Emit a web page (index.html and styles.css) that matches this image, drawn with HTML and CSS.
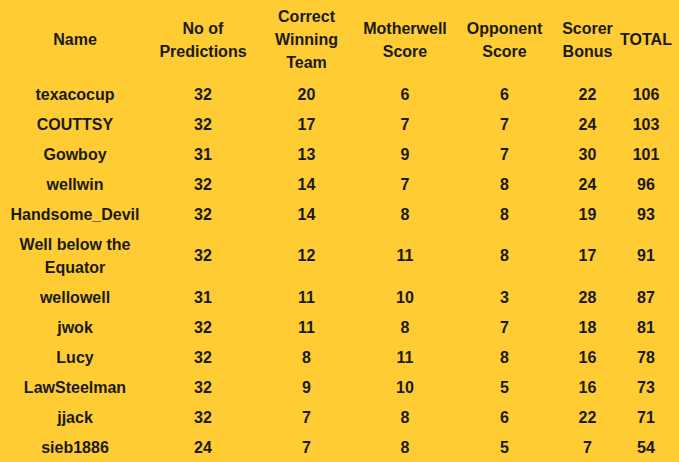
FILE: index.html
```html
<!DOCTYPE html>
<html>
<head>
<meta charset="utf-8">
<link rel="stylesheet" href="styles.css">
</head>
<body>
<table class="league">
  <colgroup>
    <col class="c-name"><col class="c-pred"><col class="c-win"><col class="c-mw"><col class="c-opp"><col class="c-bonus"><col class="c-total">
  </colgroup>
  <thead>
    <tr class="head">
      <th>Name</th>
      <th>No of<br>Predictions</th>
      <th>Correct<br>Winning<br>Team</th>
      <th>Motherwell<br>Score</th>
      <th>Opponent<br>Score</th>
      <th>Scorer<br>Bonus</th>
      <th>TOTAL</th>
    </tr>
  </thead>
  <tbody>
    <tr><td>texacocup</td><td>32</td><td>20</td><td>6</td><td>6</td><td>22</td><td>106</td></tr>
    <tr><td>COUTTSY</td><td>32</td><td>17</td><td>7</td><td>7</td><td>24</td><td>103</td></tr>
    <tr><td>Gowboy</td><td>31</td><td>13</td><td>9</td><td>7</td><td>30</td><td>101</td></tr>
    <tr><td>wellwin</td><td>32</td><td>14</td><td>7</td><td>8</td><td>24</td><td>96</td></tr>
    <tr><td>Handsome_Devil</td><td>32</td><td>14</td><td>8</td><td>8</td><td>19</td><td>93</td></tr>
    <tr><td>Well below the<br>Equator</td><td>32</td><td>12</td><td>11</td><td>8</td><td>17</td><td>91</td></tr>
    <tr><td>wellowell</td><td>31</td><td>11</td><td>10</td><td>3</td><td>28</td><td>87</td></tr>
    <tr><td>jwok</td><td>32</td><td>11</td><td>8</td><td>7</td><td>18</td><td>81</td></tr>
    <tr><td>Lucy</td><td>32</td><td>8</td><td>11</td><td>8</td><td>16</td><td>78</td></tr>
    <tr><td>LawSteelman</td><td>32</td><td>9</td><td>10</td><td>5</td><td>16</td><td>73</td></tr>
    <tr><td>jjack</td><td>32</td><td>7</td><td>8</td><td>6</td><td>22</td><td>71</td></tr>
    <tr><td>sieb1886</td><td>24</td><td>7</td><td>8</td><td>5</td><td>7</td><td>54</td></tr>
  </tbody>
</table>
</body>
</html>
```
FILE: styles.css
```css
html, body {
  margin: 0;
  padding: 0;
  background: #ffcc33;
}
body {
  font-family: "Liberation Sans", Arial, sans-serif;
  font-weight: bold;
  font-size: 16px;
  color: #1a1a14;
  overflow: hidden;
}
.league {
  border-collapse: collapse;
  table-layout: fixed;
  width: 673px;
}
.c-name { width: 150px; }
.c-pred { width: 106px; }
.c-win { width: 101px; }
.c-mw { width: 96px; }
.c-opp { width: 103px; }
.c-bonus { width: 63px; }
.c-total { width: 54px; }
.league th,
.league td {
  padding: 3.5px 0;
  text-align: center;
  vertical-align: middle;
  line-height: 23px;
  font-weight: bold;
  white-space: nowrap;
}
.league .head th {
  padding: 5px 0;
}
```
